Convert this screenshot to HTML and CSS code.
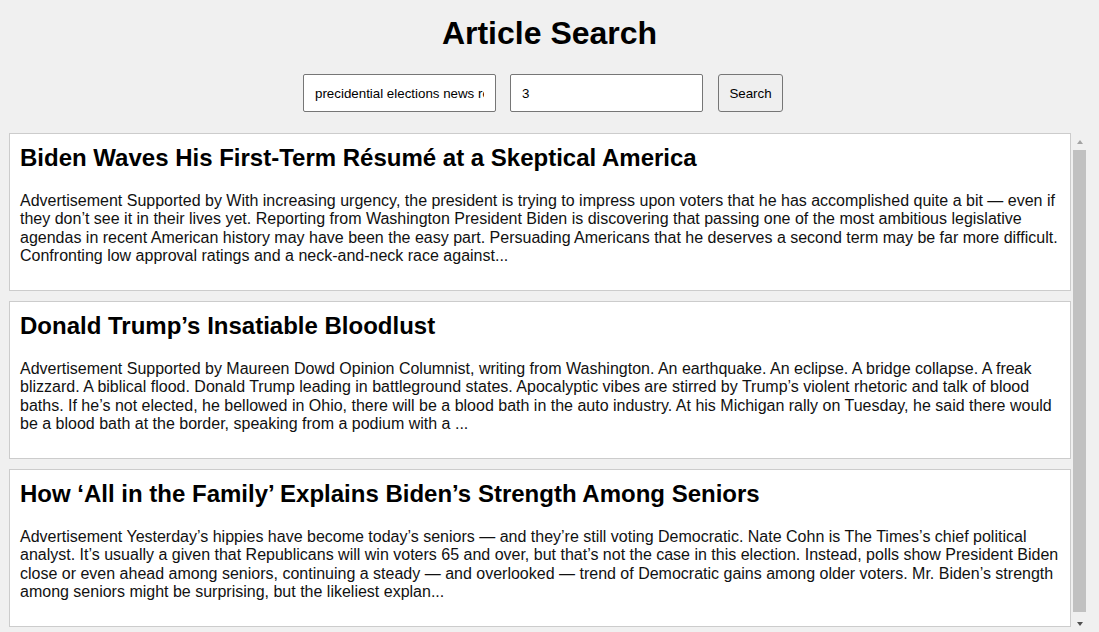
FILE: index.html
```html
<!DOCTYPE html>
<html lang="en">
<head>
<meta charset="utf-8">
<title>Article Search</title>
<link rel="stylesheet" href="styles.css">
</head>
<body>
<h1 class="title">Article Search</h1>
<form class="search-form">
  <input class="field" type="text" value="precidential elections news reports">
  <input class="field" type="text" value="3">
  <button class="btn" type="button">Search</button>
</form>
<div class="results-wrap">
  <div class="results">
    <div class="card">
      <h2 class="card-title">Biden Waves His First-Term Résumé at a Skeptical America</h2>
      <p class="card-text">Advertisement Supported by With increasing urgency, the president is trying to impress upon voters that he has accomplished quite a bit — even if they don’t see it in their lives yet. Reporting from Washington President Biden is discovering that passing one of the most ambitious legislative agendas in recent American history may have been the easy part. Persuading Americans that he deserves a second term may be far more difficult. Confronting low approval ratings and a neck-and-neck race against...</p>
    </div>
    <div class="card">
      <h2 class="card-title">Donald Trump’s Insatiable Bloodlust</h2>
      <p class="card-text">Advertisement Supported by Maureen Dowd Opinion Columnist, writing from Washington. An earthquake. An eclipse. A bridge collapse. A freak blizzard. A biblical flood. Donald Trump leading in battleground states. Apocalyptic vibes are stirred by Trump’s violent rhetoric and talk of blood baths. If he’s not elected, he bellowed in Ohio, there will be a blood bath in the auto industry. At his Michigan rally on Tuesday, he said there would be a blood bath at the border, speaking from a podium with a ...</p>
    </div>
    <div class="card">
      <h2 class="card-title">How ‘All in the Family’ Explains Biden’s Strength Among Seniors</h2>
      <p class="card-text">Advertisement Yesterday’s hippies have become today’s seniors — and they’re still voting Democratic. Nate Cohn is The Times’s chief political analyst. It’s usually a given that Republicans will win voters 65 and over, but that’s not the case in this election. Instead, polls show President Biden close or even ahead among seniors, continuing a steady — and overlooked — trend of Democratic gains among older voters. Mr. Biden’s strength among seniors might be surprising, but the likeliest explan...</p>
    </div>
  </div>
  <div class="scrollbar" aria-hidden="true">
    <div class="sb-btn"><span class="arrow-up"></span></div>
    <div class="sb-track"><div class="sb-thumb"></div></div>
    <div class="sb-btn"><span class="arrow-down"></span></div>
  </div>
</div>
</body>
</html>
```

FILE: styles.css
```css
html, body {
  margin: 0;
  padding: 0;
  height: 100%;
  overflow: hidden;
}

body {
  background: #f0f0f0;
  font-family: "Liberation Sans", Arial, sans-serif;
  color: #000;
}

.title {
  margin: 0;
  padding-top: 15px;
  font-size: 32px;
  font-weight: bold;
  line-height: 37px;
  text-align: center;
}

.search-form {
  display: flex;
  justify-content: center;
  align-items: center;
  margin-top: 22px;
}

.field {
  box-sizing: border-box;
  width: 193px;
  height: 38px;
  padding: 10px 11px;
  border: 1px solid #767676;
  border-radius: 2px;
  background: #fff;
  font-family: "Liberation Sans", Arial, sans-serif;
  font-size: 13.33px;
  color: #000;
  margin-right: 14px;
}

.field + .field {
  margin-right: 15px;
}

.btn {
  box-sizing: border-box;
  width: 65px;
  height: 38px;
  padding: 0;
  margin-right: 13px;
  border: 1px solid #767676;
  border-radius: 3px;
  background: #efefef;
  font-family: "Liberation Sans", Arial, sans-serif;
  font-size: 13.33px;
  color: #000;
}

.results-wrap {
  display: flex;
  margin: 21px 0 0 9px;
  width: 1079px;
  height: 499px;
}

.results {
  flex: 1;
  overflow: hidden;
}

.scrollbar {
  width: 17px;
  display: flex;
  flex-direction: column;
  background: #f0f0f0;
}

.sb-btn {
  height: 17px;
  display: flex;
  align-items: center;
  justify-content: center;
  flex: none;
}

.arrow-up {
  width: 0;
  height: 0;
  border-left: 3.5px solid transparent;
  border-right: 3.5px solid transparent;
  border-bottom: 4px solid #a3a3a3;
}

.arrow-down {
  width: 0;
  height: 0;
  border-left: 3.5px solid transparent;
  border-right: 3.5px solid transparent;
  border-top: 4px solid #505050;
}

.sb-track {
  flex: 1;
  padding: 0 2px;
}

.sb-thumb {
  height: 462px;
  background: #c1c1c1;
}

.card {
  background: #fff;
  border: 1px solid #ccc;
  padding: 10px;
  margin-bottom: 10px;
}

.card-title {
  margin: 0 0 20px;
  font-size: 24px;
  font-weight: bold;
  line-height: 28px;
}

.card-text {
  margin: 0 0 14.4px;
  font-size: 16px;
  line-height: 18.4px;
  color: #111;
}
```
